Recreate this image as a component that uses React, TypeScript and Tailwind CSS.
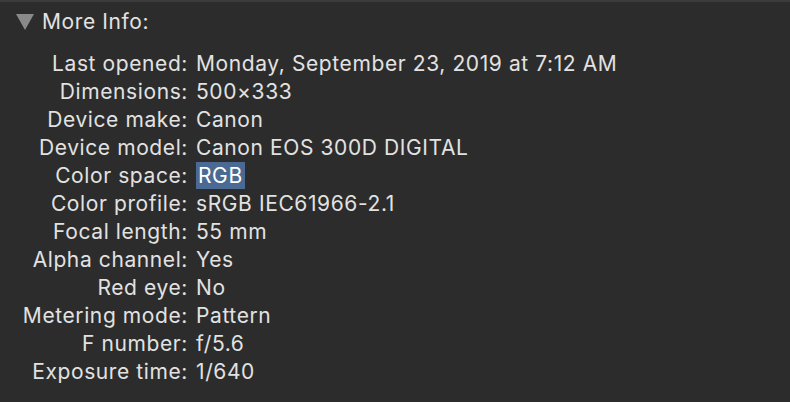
import React from "react";

const rows: [string, string][] = [
  ["Last opened:", "Monday, September 23, 2019 at 7:12 AM"],
  ["Dimensions:", "500×333"],
  ["Device make:", "Canon"],
  ["Device model:", "Canon EOS 300D DIGITAL"],
  ["Color space:", "RGB"],
  ["Color profile:", "sRGB IEC61966-2.1"],
  ["Focal length:", "55 mm"],
  ["Alpha channel:", "Yes"],
  ["Red eye:", "No"],
  ["Metering mode:", "Pattern"],
  ["F number:", "f/5.6"],
  ["Exposure time:", "1/640"],
];

export default function App() {
  return (
    <div
      className="w-[790px] h-[402px] bg-[#2c2c2c] text-[#e2e2e2] overflow-hidden border-t-2 border-[#3b3b3b] tracking-[0.6px]"
      style={{ fontFamily: "Inter, 'Noto Sans', sans-serif" }}
    >
      <div className="flex items-center h-[30px] mt-[5px] pl-4 gap-2">
        <svg width="18" height="16" viewBox="0 0 18 16">
          <polygon points="0,0 18,0 9,16" fill="#8a8a8a" />
        </svg>
        <span className="text-[21px]">More Info:</span>
      </div>
      <div className="mt-[13px] flex flex-col">
        {rows.map(([k, v]) => (
          <div key={k} className="flex h-[28px] items-center text-[21px]">
            <div className="w-[188px] text-right shrink-0">{k}</div>
            <div className="pl-[8px]">
              {k === "Color space:" ? (
                <span className="bg-[#4b6a93] px-[2px] py-[1px] text-white">{v}</span>
              ) : (
                v
              )}
            </div>
          </div>
        ))}
      </div>
    </div>
  );
}
